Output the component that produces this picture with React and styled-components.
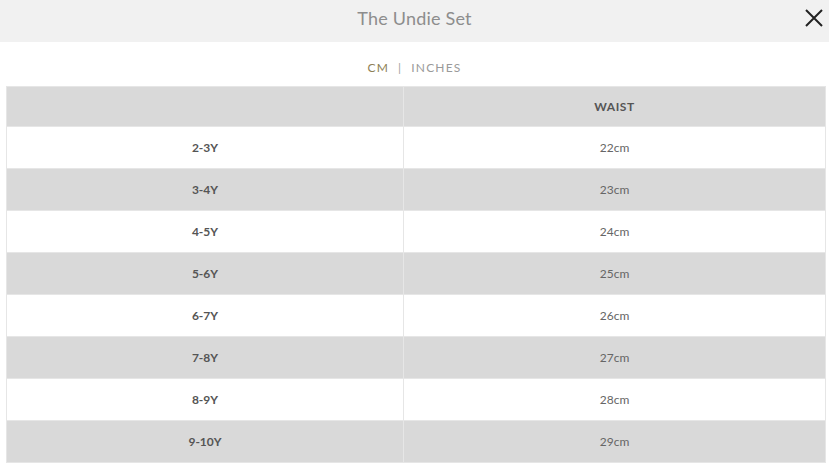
import React from "react";
import styled, { createGlobalStyle } from "styled-components";

const Global = createGlobalStyle`
  html, body { margin: 0; padding: 0; background: #fff; }
  body { font-family: "Lato", "Liberation Sans", sans-serif; }
`;

const Page = styled.div`
  width: 829px;
  height: 468px;
  display: flex;
  flex-direction: column;
  overflow: hidden;
`;

const Header = styled.header`
  height: 42px;
  box-sizing: border-box;
  padding-bottom: 6px;
  background: #f1f1f1;
  display: flex;
  align-items: center;
  justify-content: center;
  position: relative;
`;

const Title = styled.h1`
  margin: 0;
  font-weight: 400;
  font-size: 18px;
  color: #8d8d8d;
  letter-spacing: 0.2px;
`;

const Close = styled.button`
  position: absolute;
  right: 4px;
  top: 7px;
  width: 22px;
  height: 22px;
  padding: 0;
  border: 0;
  background: transparent;
  display: flex;
  align-items: center;
  justify-content: center;
`;

const Toggle = styled.div`
  height: 44px;
  display: flex;
  align-items: center;
  justify-content: center;
  gap: 9px;
  font-size: 12px;
  letter-spacing: 1.2px;
  padding-top: 6px;
  box-sizing: border-box;
`;

const Unit = styled.span`
  color: ${(p) => (p.$active ? "#8e7f55" : "#9a9a9a")};
`;

const Sep = styled.span`
  color: #a0a0a0;
`;

const TableWrap = styled.div`
  padding: 0 3px 0 6px;
`;

const Table = styled.table`
  width: 820px;
  border-collapse: collapse;
  table-layout: fixed;
`;

const Row = styled.tr`
  background: ${(p) => (p.$shade ? "#d9d9d9" : "#ffffff")};
  height: ${(p) => (p.$head ? "40px" : "42px")};
`;

const Cell = styled.td`
  border: 1px solid #e6e6e6;
  text-align: center;
  padding: 0;
  font-size: 12px;
  color: ${(p) => (p.$bold ? "#555" : "#666")};
  font-weight: ${(p) => (p.$bold ? 700 : 400)};
  letter-spacing: ${(p) => (p.$caps ? "0.6px" : "0")};
`;

const rows = [
  ["2-3Y", "22cm"],
  ["3-4Y", "23cm"],
  ["4-5Y", "24cm"],
  ["5-6Y", "25cm"],
  ["6-7Y", "26cm"],
  ["7-8Y", "27cm"],
  ["8-9Y", "28cm"],
  ["9-10Y", "29cm"],
];

export default function App() {
  return (
    <Page>
      <Global />
      <Header>
        <Title>The Undie Set</Title>
        <Close aria-label="close">
          <svg width="20" height="20" viewBox="0 0 20 20">
            <path d="M2 2 L18 18 M18 2 L2 18" stroke="#222" strokeWidth="2" fill="none" />
          </svg>
        </Close>
      </Header>
      <Toggle>
        <Unit $active>CM</Unit>
        <Sep>|</Sep>
        <Unit>INCHES</Unit>
      </Toggle>
      <TableWrap>
        <Table>
          <colgroup>
            <col style={{ width: "397px" }} />
            <col />
          </colgroup>
          <tbody>
            <Row $shade $head>
              <Cell />
              <Cell $bold $caps>WAIST</Cell>
            </Row>
            {rows.map(([s, w], i) => (
              <Row key={s} $shade={i % 2 === 1}>
                <Cell $bold>{s}</Cell>
                <Cell>{w}</Cell>
              </Row>
            ))}
          </tbody>
        </Table>
      </TableWrap>
    </Page>
  );
}
